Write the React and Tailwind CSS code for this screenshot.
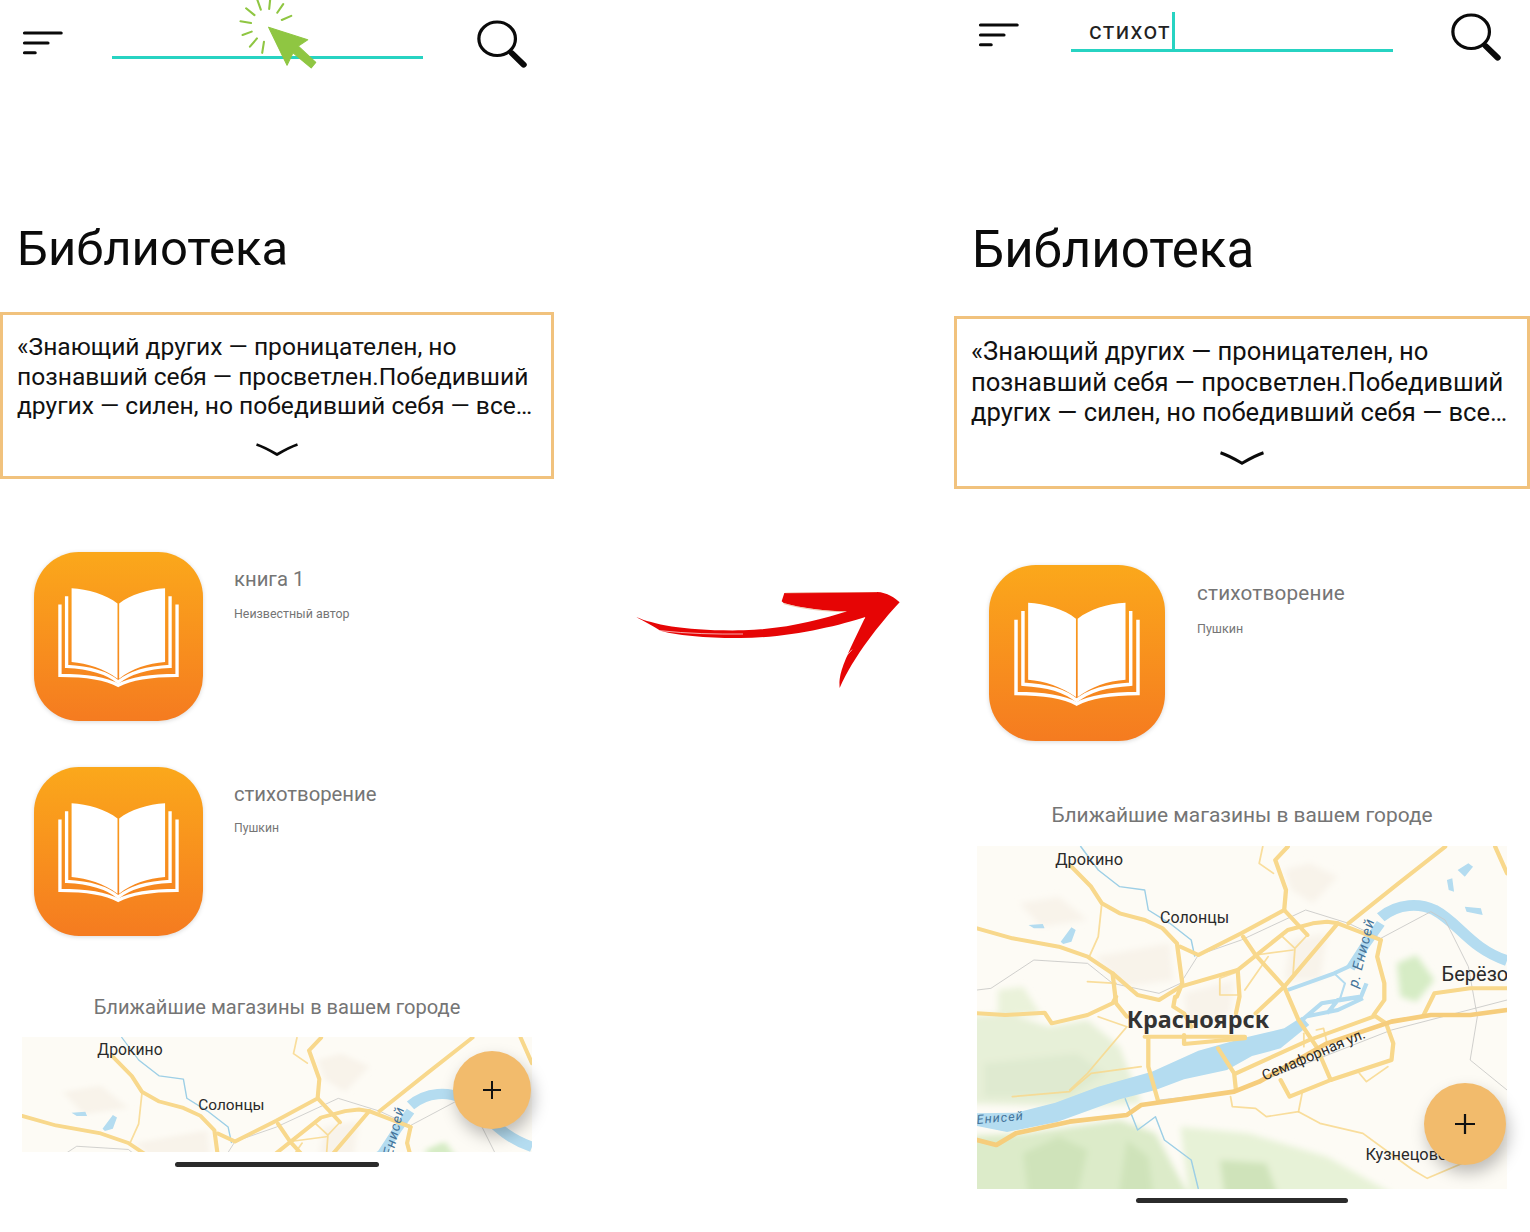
import React from "react";

const FONT = "font-['Roboto','Noto_Sans',sans-serif]";

function Hamburger({ className }) {
  return (
    <svg viewBox="60 90 118 75" preserveAspectRatio="none" className={className} fill="none" stroke="#0a0a0a" strokeWidth="9" strokeLinecap="round">
      <path d="M67 99H170M67 129H133M67 158H97" />
    </svg>
  );
}

function SearchIcon({ className }) {
  return (
    <svg viewBox="1335 52 145 152" preserveAspectRatio="none" className={className} fill="none" stroke="#0a0a0a" strokeLinecap="round">
      <circle cx="1394" cy="115" r="51" strokeWidth="9" />
      <path d="M1434 158L1468 194" strokeWidth="17" />
    </svg>
  );
}

function Chevron({ className }) {
  return (
    <svg viewBox="0 0 42 14" className={className} fill="none" stroke="#0a0a0a" strokeWidth="2.8" strokeLinejoin="miter">
      <path d="M0.5 1.5C8 4 15 8 21 11.5C27 8 34 4 41.5 1.5" />
    </svg>
  );
}

function BookIcon({ id, className }) {
  return (
    <svg viewBox="40 37 508 508" className={className}>
      <defs>
        <linearGradient id={id} x1="0" y1="0" x2="0" y2="1">
          <stop offset="0" stopColor="#fba81b" />
          <stop offset="1" stopColor="#f57b20" />
        </linearGradient>
      </defs>
      <rect x="40" y="37" width="508" height="508" rx="135" fill={`url(#${id})`} />
      <path d="M153 146C200 148 258 165 291 192V418C250 388 200 372 153 368Z" fill="#fff" />
      <path d="M296 192C330 165 382 149 434 146V368C382 372 335 388 296 418Z" fill="#fff" />
      <path d="M138 170V381C200 384 258 398 293 428C330 398 388 384 449 381V170" fill="none" stroke="#fff" strokeWidth="10" />
      <path d="M118 195V408C190 408 250 414 293 438C338 414 398 408 470 408V195" fill="none" stroke="#fff" strokeWidth="10" />
    </svg>
  );
}

function RedArrow({ className }) {
  return (
    <svg viewBox="48 67 790 288" className={className}>
      <path
        d="M48 142C100 165 200 185 370 182C500 178 600 150 680 125C620 125 540 115 490 100L484 95L492 70L770 67C800 68 825 85 838 98C780 160 700 260 658 355C655 320 665 290 700 215L735 142C650 170 500 205 360 205C280 205 180 200 120 183C100 170 70 155 48 142Z"
        fill="#e60505"
      />
      <path d="M118 183C200 192 290 194 368 193" fill="none" stroke="#fff" strokeWidth="2" />
      <path d="M495 203C590 190 670 168 733 146" fill="none" stroke="#fff" strokeWidth="2.5" />
      <path d="M670 268L695 240" fill="none" stroke="#fff" strokeWidth="2" />
      <path d="M490 102C540 116 610 126 675 126" fill="none" stroke="#e2b08c" strokeWidth="2" />
      <path d="M495 70L770 67" fill="none" stroke="#e2b08c" strokeWidth="1.5" />
    </svg>
  );
}

function ClickCursor({ className }) {
  return (
    <svg viewBox="660 0 240 210" preserveAspectRatio="none" className={className} fill="none" stroke="#8fc642" strokeWidth="6" strokeLinecap="round">
      <path d="M718 5L728 34M755 2L752 32M792 18L775 43M815 52L788 64M670 68L700 73M686 30L710 50M702 98L676 108M717 118L697 142M737 128L732 160" />
      <path d="M750 85L862 122L835 140L885 188L872 204L820 160L803 196Z" fill="#8fc642" stroke="#8fc642" strokeWidth="3" strokeLinejoin="round" />
    </svg>
  );
}

const ROAD = "#f8d88c";

// Map units are about 2.8 per pixel across and 3 per pixel down, so labels are narrowed to stay undistorted.
function Label({ x, y, size, rot = 0, ...rest }) {
  return (
    <text transform={`translate(${x} ${y}) scale(0.9333 1) rotate(${rot})`} fontSize={size} {...rest}>
      {rest.children}
    </text>
  );
}

function MapArt({ id, viewBox, full, className }) {
  const main = [
    "M285 80L340 140L370 190L420 220L490 240L540 265L580 310L595 430L580 470",
    "M590 320L640 345L760 280L880 210L885 150L855 60L890 20",
    "M880 210L945 285",
    "M21 265L120 295L250 320L330 350L400 400L470 465L530 480L590 440L750 390L890 270L960 250L1000 245L1030 250L1150 300",
    "M1060 250L1200 130L1330 20",
    "M765 290L800 345L880 440L920 540L970 620L1010 720",
    "M21 520L100 525L210 518L230 550L330 525L400 490L410 470",
    "M400 400L410 490L440 530",
    "M1030 250L880 440L800 520",
    "M750 390L755 470L745 520",
    "M1150 300L1140 350L1160 430L1160 480L1130 525L1165 550L1185 610L1180 660L1010 720L895 770L870 720",
    "M490 590L770 590",
    "M600 585L600 612L770 595",
    "M500 590L500 680L528 785",
    "M695 625L740 700L745 750",
    "M745 700L950 600L1130 530",
    "M1270 525L1300 460L1400 445L1503 445",
    "M575 470L570 500L600 520L620 560",
    "M1470 20L1503 100",
  ];
  const thin = [
    "M370 190L360 290L335 350",
    "M330 425L410 430",
    "M700 415L750 395M700 415V465H750",
    "M875 290L910 325L945 285M910 325L905 400",
    "M835 350L770 450M800 345L905 330",
    "M820 20L810 70L850 100",
    "M360 530L440 560L330 700L280 750M120 770L280 755L340 700L480 680",
    "M730 770L735 800L800 805L830 830L920 815L930 760",
    "M920 815L980 850L1100 880L1240 990L1280 1015L1400 960",
    "M1090 700L1110 725L1170 680",
    "M970 570L990 565L1000 610",
    "M935 580V620",
  ];
  return (
    <svg viewBox={viewBox} preserveAspectRatio="none" className={className}>
      <defs>
        <filter id={`${id}-soft`} x="-10%" y="-10%" width="120%" height="120%">
          <feGaussianBlur stdDeviation="9" />
        </filter>
        <filter id={`${id}-line`} x="-10%" y="-10%" width="120%" height="120%">
          <feGaussianBlur stdDeviation="0.9" />
        </filter>
      </defs>
      <rect x="0" y="0" width="1600" height="1100" fill="#fdfbf5" />
      <g filter={`url(#${id}-soft)`}>
        <path d="M880 90L950 70L1030 110L960 190L900 150Z M140 190L250 170L330 240L200 260Z M350 350L560 310L570 420L430 440Z M600 460L740 420L730 520L610 560Z M900 300L1000 280L980 420L880 420Z" fill="#f8f3ea" />
        <path d="M-40 530L110 520L220 560L330 540L420 620L480 790L300 800L-40 790Z" fill="#e7f0d8" />
        <path d="M80 450L150 440L200 525L80 525Z" fill="#eaf2da" />
        <path d="M-40 890L160 880L420 840L520 880L640 1120L-40 1120Z" fill="#dcebc9" />
        <path d="M590 860L780 880L1000 950L1280 1120L620 1120Z" fill="#e7f2d7" />
        <path d="M40 670L300 640L380 700L280 770L40 770Z" fill="#dfead0" />
        <path d="M150 940L250 890L330 930L290 1120L170 1120Z M440 900L500 950L520 1120L410 1120Z M700 960L830 970L880 1120L720 1120Z" fill="#cfe3ba" />
        <path d="M1195 370L1250 345L1300 420L1250 485L1205 470Z" fill="#d6ecc5" />
      </g>
      <g filter={`url(#${id}-line)`}>
        <g fill="#b4dcf0">
          <path d="M21 820L130 818L240 788L360 740L510 695L640 632L780 590L880 565L930 530L950 555L870 625L790 648L720 690L600 718L520 750L420 778L245 846L105 876L21 858Z" />
          <path d="M255 305L285 262L297 270L285 305L262 312Z M165 255L205 252L210 265L180 265Z M1335 120L1350 115L1355 155L1340 150Z M1365 90L1395 70L1408 80L1385 110Z M1385 200L1430 205L1435 225L1390 215Z" />
        </g>
        <g fill="none" stroke="#b4dcf0" strokeLinejoin="round">
          <path d="M930 540L985 490L1095 470L1110 430M1000 520L1030 480L1090 470M890 450L1020 400L1070 375M940 530L1030 510L1100 475" strokeWidth="12" />
          <path d="M1020 400L1050 430L1035 480" strokeWidth="6" />
          <path d="M1065 385L1110 310L1150 250" strokeWidth="26" />
          <path d="M1150 232C1200 188 1260 190 1300 210C1370 250 1400 325 1503 362" strokeWidth="32" />
          <path d="M310 18L360 90L420 140L490 150L500 210L560 250L620 300L630 350" stroke="#9dcfe6" strokeWidth="4" />
          <path d="M435 775L470 870L520 830L545 900L620 960L640 1047" stroke="#9dcfe6" strokeWidth="4" />
        </g>
        <g fill="none" stroke="#c9c9c6" strokeWidth="2.5">
          <path d="M21 450L60 445L180 360L330 370L400 430L530 460L590 430L640 345L760 300L940 210L1060 250L1150 295L1290 215L1330 240L1395 380L1420 530L1400 660L1503 750" />
          <path d="M530 780L740 755L1180 570L1503 480" />
        </g>
        <g fill="none" stroke={ROAD} strokeLinejoin="round" strokeLinecap="round">
          {thin.map((d) => (
            <path key={d} d={d} strokeWidth="5" opacity="0.85" />
          ))}
          {main.map((d) => (
            <path key={d} d={d} strokeWidth="12" />
          ))}
          <path d="M21 900L75 915L130 880L280 845L440 825L480 795L740 755L810 725L1000 610L1180 545L1290 525L1400 525L1503 510" stroke="#f6cd7c" strokeWidth="14" />
        </g>
      </g>
      <g fontFamily="Roboto, 'Noto Sans', sans-serif" fill="#2a2a2a">
        <Label x={240} y={74} size={49}>Дрокино</Label>
        <Label x={533} y={248} size={48}>Солонцы</Label>
        {full && <Label x={1320} y={422} size={60}>Берёзо</Label>}
        {full && (
          <Label x={440} y={564} size={70} fontWeight="700" fontFamily="'Noto Sans', Roboto, sans-serif" fill="#333">
            Красноярск
          </Label>
        )}
        {full && <Label x={1107} y={960} size={49}>Кузнецово</Label>}
        {full && <Label x={825} y={722} size={44} rot={-23}>Семафорная ул.</Label>}
        <g fill="#44749a" fontStyle="italic">
          {full && <Label x={21} y={852} size={38} rot={-5} letterSpacing="3">Енисей</Label>}
          <Label x={1085} y={445} size={43} rot={-76} letterSpacing="3">р. Енисей</Label>
        </g>
      </g>
    </svg>
  );
}

function Row({ children, className }) {
  return <div className={`flex items-start ${className}`}>{children}</div>;
}

export default function App() {
  return (
    <div className={`w-[1530px] h-[1232px] bg-white flex overflow-hidden ${FONT}`}>
      {/* left screen */}
      <div className="w-[554px] shrink-0 flex flex-col relative">
        <header className="flex items-start h-[70px] pl-[22px]">
          <Hamburger className="w-[42px] h-[25px] mt-[30px]" />
          <div className="ml-[48px] w-[311px] h-[59px] border-b-[3px] border-[#27d3c2]" />
          <SearchIcon className="ml-[53px] mt-[18px] w-[52px] h-[50px]" />
        </header>
        <ClickCursor className="absolute left-[237px] top-[-2px] w-[84px] h-[72px]" />
        <h1 className="mt-[150px] ml-[17px] text-[49px] leading-[58px] text-[#0b0b0b]">Библиотека</h1>
        <section className="mt-[34px] h-[167px] border-[3px] border-[#f1c27d] flex flex-col">
          <p className="pl-[14px] pt-[17px] text-[24.6px] leading-[29.5px] text-[#111] whitespace-nowrap">
            «Знающий других — проницателен, но
            <br />
            познавший себя — просветлен.Победивший
            <br />
            других — силен, но победивший себя — все…
          </p>
          <Chevron className="mt-[22px] mx-auto w-[42px] h-[14px]" />
        </section>
        <Row className="mt-[73px] pl-[34px]">
          <BookIcon id="b1" className="w-[169px] h-[169px] shrink-0 drop-shadow-[0_1px_2px_rgba(0,0,0,0.15)]" />
          <div className="ml-[31px] pt-[15px]">
            <div className="text-[20.3px] leading-[24px] text-[#757575]">книга 1</div>
            <div className="mt-[15px] text-[12.4px] leading-[15px] text-[#757575]">Неизвестный автор</div>
          </div>
        </Row>
        <Row className="mt-[46px] pl-[34px]">
          <BookIcon id="b2" className="w-[169px] h-[169px] shrink-0 drop-shadow-[0_1px_2px_rgba(0,0,0,0.15)]" />
          <div className="ml-[31px] pt-[15px]">
            <div className="text-[20.3px] leading-[24px] text-[#757575]">стихотворение</div>
            <div className="mt-[15px] text-[12.2px] leading-[15px] text-[#757575]">Пушкин</div>
          </div>
        </Row>
        <div className="mt-[59px] text-center text-[20.1px] leading-[24px] text-[#757575]">Ближайшие магазины в вашем городе</div>
        <MapArt id="m1" viewBox="21 18 1482 360" className="mt-[18px] ml-[22px] w-[510px] h-[115px] block" />
        <div className="mt-[10px] ml-[175px] w-[204px] h-[5px] rounded-full bg-[#2b2b2b]" />
        <button className="absolute left-[453px] top-[1051px] w-[78px] h-[78px] rounded-full bg-[#f2bb6c] shadow-[3px_8px_16px_rgba(0,0,0,0.25)] flex items-center justify-center">
          <svg viewBox="0 0 18 18" className="w-[18px] h-[18px]" stroke="#111" strokeWidth="2"><path d="M9 0V18M0 9H18" /></svg>
        </button>
      </div>

      {/* arrow gap */}
      <div className="w-[400px] shrink-0 pt-[592px] pl-[82px]">
        <RedArrow className="w-[264px] h-[96px]" />
      </div>

      {/* right screen */}
      <div className="w-[576px] shrink-0 flex flex-col relative">
        <header className="flex items-start h-[70px] pl-[24px]">
          <Hamburger className="w-[42px] h-[25px] mt-[22px]" />
          <div className="ml-[51px] w-[322px] h-[52px] border-b-[3px] border-[#27d3c2] pl-[18px] pt-[17px] flex items-start">
            <span className="text-[24px] leading-[28px] tracking-[1.2px] text-[#222]">стихот</span>
            <span className="ml-[1px] -mt-[5px] w-[3px] h-[37px] bg-[#27d3c2]" />
          </div>
          <SearchIcon className="ml-[57px] mt-[11px] w-[52px] h-[50px]" />
        </header>
        <h1 className="mt-[150px] ml-[18px] text-[51px] leading-[60px] text-[#0b0b0b]">Библиотека</h1>
        <section className="mt-[36px] h-[173px] border-[3px] border-[#f1c27d] flex flex-col">
          <p className="pl-[14px] pt-[17px] text-[25.6px] leading-[30.5px] text-[#111] whitespace-nowrap">
            «Знающий других — проницателен, но
            <br />
            познавший себя — просветлен.Победивший
            <br />
            других — силен, но победивший себя — все…
          </p>
          <Chevron className="mt-[23px] mx-auto w-[44px] h-[15px]" />
        </section>
        <Row className="mt-[76px] pl-[35px]">
          <BookIcon id="b3" className="w-[176px] h-[176px] shrink-0 drop-shadow-[0_1px_2px_rgba(0,0,0,0.15)]" />
          <div className="ml-[32px] pt-[16px]">
            <div className="text-[20.7px] leading-[25px] tracking-[0.2px] text-[#757575]">стихотворение</div>
            <div className="mt-[15px] text-[12.5px] leading-[15px] text-[#757575]">Пушкин</div>
          </div>
        </Row>
        <div className="mt-[62px] text-center text-[20.9px] leading-[24px] text-[#757575]">Ближайшие магазины в вашем городе</div>
        <MapArt id="m2" full viewBox="21 18 1482 1029" className="mt-[19px] ml-[23px] w-[530px] h-[343px] block" />
        <div className="mt-[9px] ml-[182px] w-[212px] h-[5px] rounded-full bg-[#2b2b2b]" />
        <button className="absolute left-[470px] top-[1083px] w-[82px] h-[82px] rounded-full bg-[#f2bb6c] shadow-[3px_8px_16px_rgba(0,0,0,0.25)] flex items-center justify-center">
          <svg viewBox="0 0 18 18" className="w-[20px] h-[20px]" stroke="#111" strokeWidth="2"><path d="M9 0V18M0 9H18" /></svg>
        </button>
      </div>
    </div>
  );
}
